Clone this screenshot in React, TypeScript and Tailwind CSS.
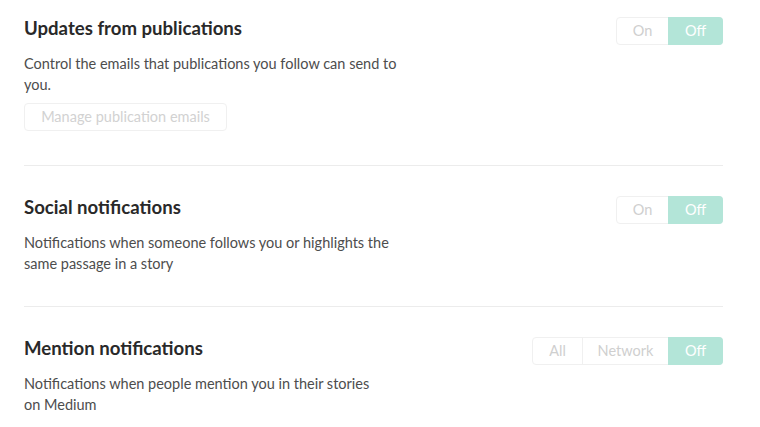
import React from 'react';

type Option = { label: string; width: string; active?: boolean };

function Segmented({ options }: { options: Option[] }) {
  return (
    <div className="mt-[1px] flex h-[28px] shrink-0 rounded-[4px] border border-[#f0f0f0] text-[14.5px]">
      {options.map((opt, i) => (
        <div
          key={opt.label}
          className={`flex items-center justify-center ${opt.width} ${
            opt.active
              ? '-my-px -mr-px rounded-r-[4px] bg-[#b3e5d8] text-white'
              : 'text-[#cfcfcf]'
          } ${i > 0 && !opt.active ? 'border-l border-[#f0f0f0]' : ''}`}
        >
          {opt.label}
        </div>
      ))}
    </div>
  );
}

function Section({
  title,
  lines,
  options,
  first,
  last,
  children,
}: {
  title: string;
  lines: string[];
  options: Option[];
  first?: boolean;
  last?: boolean;
  children?: React.ReactNode;
}) {
  return (
    <div
      className={`flex justify-between ${first ? 'pt-[16px] pb-[34px]' : 'pt-[29px] pb-[32px]'} ${
        last ? '' : 'border-b border-[#ececec]'
      }`}
    >
      <div className="flex flex-col items-start">
        <h2 className="text-[18.6px] font-bold leading-[24px] text-[#292929]">{title}</h2>
        <p className="mt-[13px] text-[14.5px] leading-[21px] whitespace-nowrap text-[#4d4d4d]">
          {lines.map((l, i) => (
            <React.Fragment key={i}>
              {i > 0 && <br />}
              {l}
            </React.Fragment>
          ))}
        </p>
        {children}
      </div>
      <Segmented options={options} />
    </div>
  );
}

export default function App() {
  return (
    <div className="min-h-[427px] bg-white pl-6" style={{ fontFamily: 'Lato, "Noto Sans", sans-serif' }}>
      <div className="w-[699px]">
        <Section
          first
          title="Updates from publications"
          lines={['Control the emails that publications you follow can send to', 'you.']}
          options={[
            { label: 'On', width: 'w-[51px]' },
            { label: 'Off', width: 'w-[55px]', active: true },
          ]}
        >
          <button className="mt-[8px] h-[28px] w-[203px] rounded-[4px] border border-[#f0f0f0] text-[14.5px] text-[#d2d2d2]">
            Manage publication emails
          </button>
        </Section>
        <Section
          title="Social notifications"
          lines={['Notifications when someone follows you or highlights the', 'same passage in a story']}
          options={[
            { label: 'On', width: 'w-[51px]' },
            { label: 'Off', width: 'w-[55px]', active: true },
          ]}
        />
        <Section
          last
          title="Mention notifications"
          lines={['Notifications when people mention you in their stories', 'on Medium']}
          options={[
            { label: 'All', width: 'w-[49px]' },
            { label: 'Network', width: 'w-[86px]' },
            { label: 'Off', width: 'w-[55px]', active: true },
          ]}
        />
      </div>
    </div>
  );
}
